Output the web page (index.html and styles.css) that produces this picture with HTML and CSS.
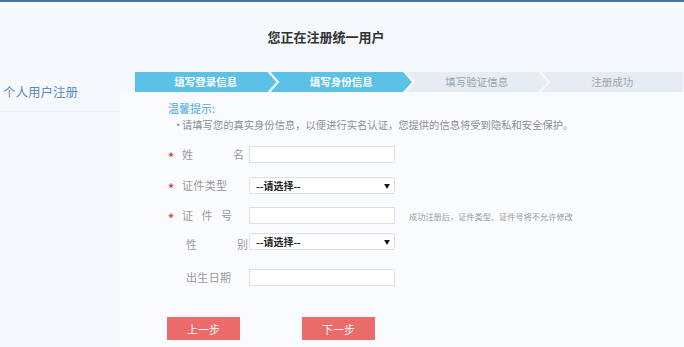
FILE: index.html
```html
<!DOCTYPE html>
<html lang="zh-CN">
<head>
  <meta charset="UTF-8" />
  <meta name="viewport" content="width=device-width, initial-scale=1.0"/>
  <title>统一用户注册</title>
  <link rel="stylesheet" href="styles.css">
</head>
<body>

  <div class="header">
    <h2>您正在注册统一用户</h2>
  </div>

  <div class="main">
    <div class="sidebar">
      <div class="side-item">个人用户注册</div>
    </div>

    <div class="content">
      <div class="steps">
        <div class="step done">填写登录信息</div>
        <div class="step done">填写身份信息</div>
        <div class="step">填写验证信息</div>
        <div class="step last">注册成功</div>
      </div>

      <div class="panel">
        <div class="tips-title">温馨提示:</div>
        <div class="tips-text"><span class="dot">•</span>请填写您的真实身份信息，以便进行实名认证，您提供的信息将受到隐私和安全保护。</div>

        <form id="identityForm">
          <div class="form-row row-name">
            <span class="star">*</span>
            <label class="lbl lbl-wide" for="realName">姓名</label>
            <input type="text" id="realName" name="realName" />
          </div>

          <div class="form-row row-type">
            <span class="star">*</span>
            <label class="lbl" for="certType">证件类型</label>
            <div class="select-box">
              <select id="certType" name="certType">
                <option value="">--请选择--</option>
                <option value="id">居民身份证</option>
                <option value="passport">护照</option>
              </select>
            </div>
          </div>

          <div class="form-row row-cert">
            <span class="star">*</span>
            <label class="lbl lbl-mid" for="certNo">证件号</label>
            <input type="text" id="certNo" name="certNo" />
            <span class="hint">成功注册后，证件类型、证件号将不允许修改</span>
          </div>

          <div class="form-row row-sex">
            <span class="star empty"></span>
            <label class="lbl lbl-sex" for="sex">性别</label>
            <div class="select-box">
              <select id="sex" name="sex">
                <option value="">--请选择--</option>
                <option value="m">男</option>
                <option value="f">女</option>
              </select>
            </div>
          </div>

          <div class="form-row row-birth">
            <span class="star empty"></span>
            <label class="lbl lbl-plain" for="birthday">出生日期</label>
            <input type="text" id="birthday" name="birthday" />
          </div>

          <div class="buttons">
            <button type="button" class="btn">上一步</button>
            <button type="submit" class="btn">下一步</button>
          </div>
        </form>
      </div>
    </div>
  </div>

</body>
</html>
```

FILE: styles.css
```css
body {
  margin: 0;
  font-family: "Noto Sans CJK SC", "Liberation Sans", sans-serif;
  background: #f5f8fc;
  border-top: 2px solid #4677ab;
  min-height: 345px;
  color: #333;
}

.header {
  width: 652px;
  height: 70px;
}

.header h2 {
  margin: 0;
  padding-top: 26px;
  text-align: center;
  font-size: 13px;
  line-height: 18px;
  font-weight: bold;
  color: #333;
}

.main {
  display: flex;
}

.sidebar {
  width: 120px;
  flex-shrink: 0;
}

.side-item {
  margin-top: 10px;
  padding: 0 0 10px 3px;
  font-size: 12.5px;
  line-height: 19px;
  color: #5b8bbf;
  border-bottom: 1px solid #e6ebf0;
}

.content {
  flex: 1;
}

.steps {
  display: flex;
  height: 20px;
  margin-left: 15px;
  margin-right: 1px;
}

.step {
  flex: 1;
  margin-left: -6px;
  background: #e5edf3;
  color: #9aa3ab;
  font-size: 10.5px;
  line-height: 20px;
  text-align: center;
  clip-path: polygon(0 0, calc(100% - 9px) 0, 100% 50%, calc(100% - 9px) 100%, 0 100%, 9px 50%);
}

.step:first-child {
  margin-left: 0;
  clip-path: polygon(0 0, calc(100% - 9px) 0, 100% 50%, calc(100% - 9px) 100%, 0 100%);
}

.step.last {
  clip-path: polygon(0 0, 100% 0, 100% 100%, 0 100%, 9px 50%);
}

.step.done {
  background: #5bc1e6;
  color: #fff;
  font-weight: bold;
}

.panel {
  background: #fafbfe;
  padding: 9px 0 20px 48px;
  min-height: 240px;
}

.tips-title {
  font-size: 11px;
  line-height: 14px;
  color: #4da6dd;
}

.tips-text {
  margin-top: 3px;
  font-size: 10.3px;
  line-height: 14px;
  color: #8a8f94;
  white-space: nowrap;
}

.dot {
  display: inline-block;
  width: 9px;
  margin-left: 5px;
}

form {
  margin-top: 14px;
}

.form-row {
  display: flex;
  align-items: center;
  height: 17px;
}

.row-type { margin-top: 14px; }
.row-cert { margin-top: 13px; }
.row-sex { margin-top: 9px; }
.row-birth { margin-top: 19px; }

.star {
  width: 14px;
  color: #e0433f;
  font-size: 12px;
  font-weight: bold;
  line-height: 17px;
  padding-top: 3px;
}

.lbl {
  width: 45px;
  margin-right: 22px;
  font-size: 11px;
  line-height: 17px;
  color: #9a9a9a;
  white-space: nowrap;
  text-align-last: justify;
}

.lbl-wide {
  width: 62px;
  margin-right: 5px;
}

.lbl-mid {
  width: 50px;
  margin-right: 17px;
}

.lbl-sex {
  width: 62px;
  margin-left: 4px;
  margin-right: 1px;
  padding-top: 5px;
}

.lbl-plain {
  width: 45px;
  margin-left: 4px;
  margin-right: 18px;
}

input {
  box-sizing: border-box;
  width: 146px;
  height: 17px;
  margin: 0;
  padding: 0 4px;
  border: 1px solid #dcdfe3;
  background: #fff;
  font-size: 10px;
}

.select-box {
  position: relative;
  width: 146px;
  height: 17px;
}

.select-box select {
  display: block;
  appearance: none;
  box-sizing: border-box;
  width: 100%;
  height: 17px;
  margin: 0;
  padding: 0 0 0 6px;
  border: 1px solid #dcdfe3;
  border-radius: 2px;
  background: #fff;
  font-family: "Noto Sans CJK SC", "Liberation Sans", sans-serif;
  font-size: 10px;
  font-weight: bold;
  color: #222;
}

.select-box::after {
  content: "▼";
  position: absolute;
  right: 5px;
  top: 4px;
  font-size: 6px;
  line-height: 9px;
  color: #111;
  pointer-events: none;
}

.hint {
  margin-left: 14px;
  font-size: 8.2px;
  color: #999;
  white-space: nowrap;
}

.buttons {
  display: flex;
  gap: 62px;
  margin-top: 31px;
  margin-left: -1px;
}

.btn {
  width: 73px;
  height: 23px;
  padding: 0;
  border: none;
  background: #eb6a6a;
  color: #fff;
  font-family: "Noto Sans CJK SC", "Liberation Sans", sans-serif;
  font-size: 11px;
  cursor: pointer;
}

.btn:hover {
  background: #d85757;
}
```
